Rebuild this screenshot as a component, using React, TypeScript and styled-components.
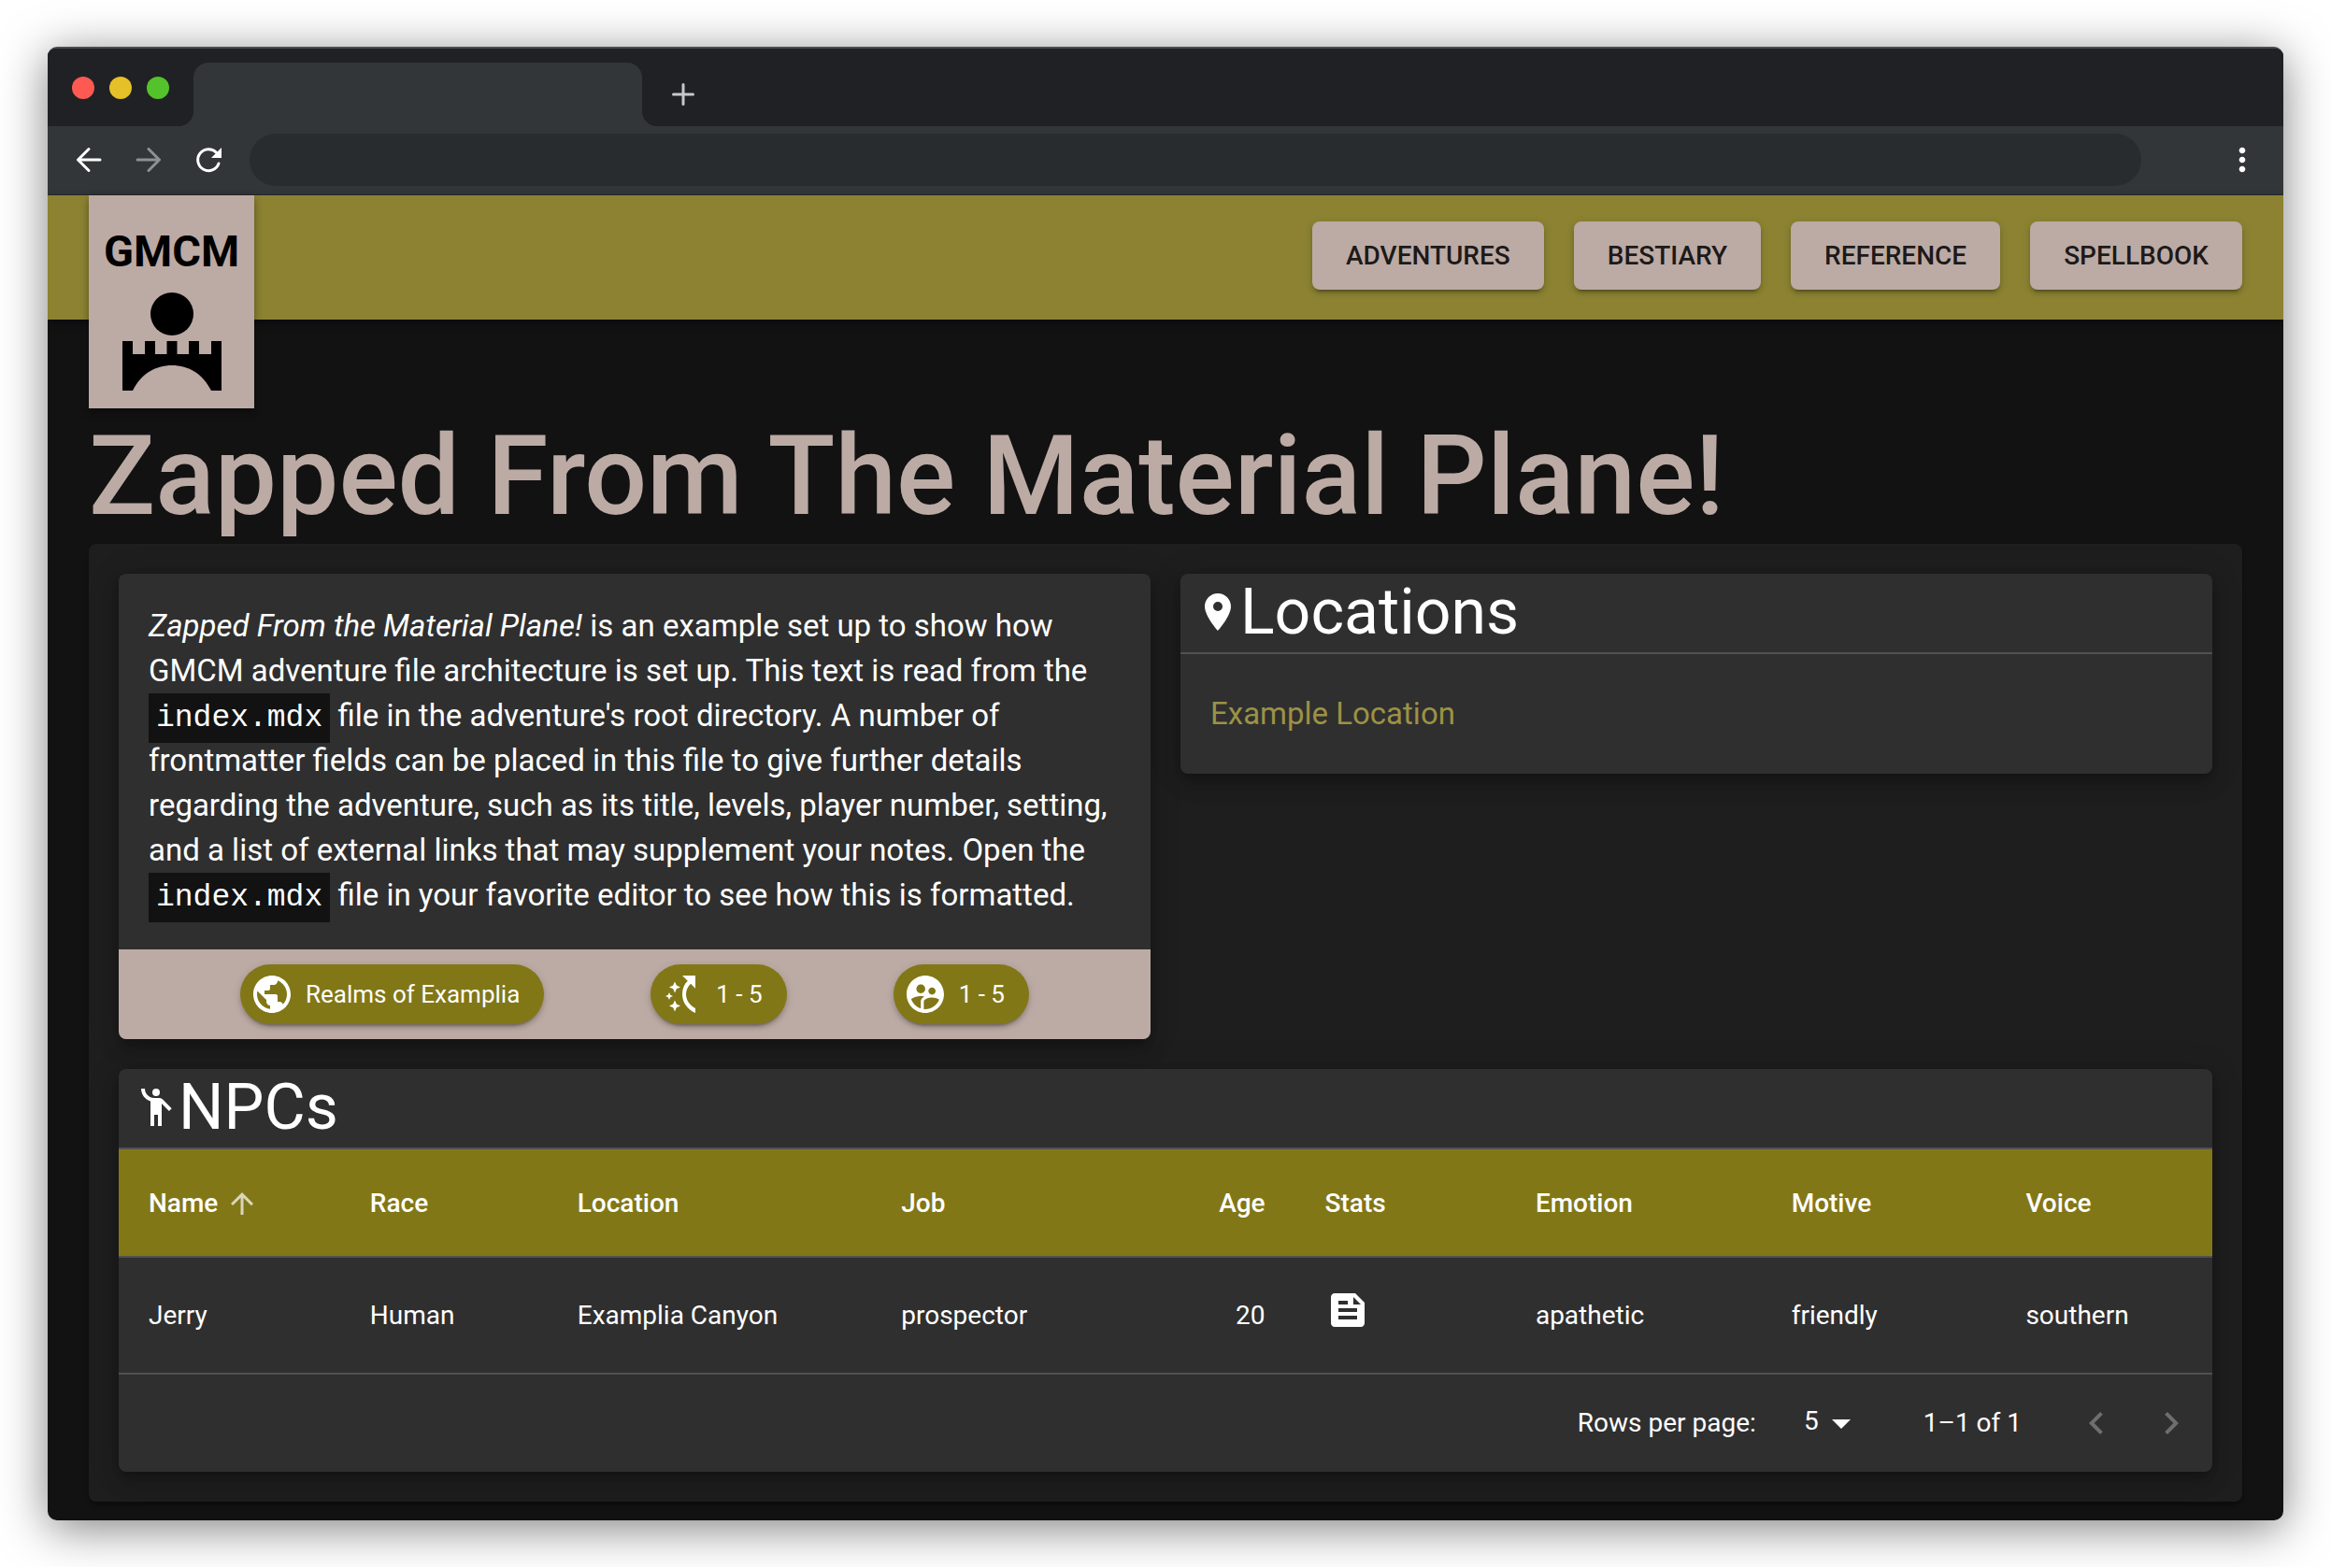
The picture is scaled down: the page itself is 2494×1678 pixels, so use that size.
import React from "react";
import styled, { createGlobalStyle } from "styled-components";
import {
  MdArrowDropDown,
  MdArrowUpward,
  MdChevronLeft,
  MdChevronRight,
  MdEmojiPeople,
  MdFeed,
  MdMoreVert,
  MdPlace,
  MdPublic,
  MdSupervisedUserCircle,
} from "react-icons/md";

const color = {
  olive: "#827717",
  oliveBar: "#8c8232",
  oliveLink: "#9b9245",
  clay: "#bcaaa4",
  page: "#121212",
  panel: "#1e1e1e",
  card: "#2f2f2f",
  rule: "#515151",
};

const GlobalStyle = createGlobalStyle`
  *, *::before, *::after { box-sizing: border-box; }
  body {
    margin: 0;
    background: #fff;
    font-family: Roboto, "Liberation Sans", sans-serif;
    font-size: 28px;
    line-height: 40px;
    color: #fff;
  }
  button, select, input { font: inherit; color: inherit; border: 0; background: none; padding: 0; margin: 0; }
  h1, h2, p { margin: 0; font-weight: 400; }
  svg { display: inline-block; flex: none; }
`;

const Desktop = styled.div`
  padding: 50px 51px;
`;

const BrowserWindow = styled.div`
  overflow: hidden;
  border-radius: 10px;
  border-top: 2px solid #4a4b4d;
  background: ${color.page};
  box-shadow: 0 8px 50px rgba(0, 0, 0, 0.5);
`;

const TabStrip = styled.div`
  display: flex;
  align-items: flex-end;
  height: 83px;
  padding-left: 26px;
  background: #202124;
`;

const Lights = styled.div`
  display: flex;
  gap: 16px;
  width: 130px;
  padding-bottom: 29px;
`;

const Light = styled.span<{ $fill: string }>`
  width: 24px;
  height: 24px;
  border-radius: 50%;
  background: ${(p) => p.$fill};
`;

const Tab = styled.div`
  position: relative;
  width: 480px;
  height: 68px;
  border-radius: 16px 16px 0 0;
  background: #323639;

  &::before,
  &::after {
    content: "";
    position: absolute;
    bottom: 0;
    width: 16px;
    height: 16px;
  }
  &::before {
    right: 100%;
    background: radial-gradient(circle at 0 0, transparent 16px, #323639 16px);
  }
  &::after {
    left: 100%;
    background: radial-gradient(circle at 100% 0, transparent 16px, #323639 16px);
  }
`;

const IconButton = styled.button<{ $fade?: number; $size?: number }>`
  display: grid;
  place-items: center;
  flex: none;
  width: ${(p) => p.$size ?? 64}px;
  height: ${(p) => p.$size ?? 64}px;
  opacity: ${(p) => p.$fade ?? 1};
`;

const NewTab = styled(IconButton)`
  height: 68px;
  margin-left: 12px;
  color: #c6c8ca;
`;

const Toolbar = styled.div`
  display: flex;
  align-items: center;
  height: 74px;
  padding: 0 12px 2px;
  background: #323639;
  border-bottom: 1px solid #26292b;
`;

const Address = styled.input`
  flex: 1;
  min-width: 0;
  height: 56px;
  margin: 0 76px 0 12px;
  padding: 0 28px;
  border-radius: 28px;
  background: #282c2f;
`;

const Header = styled.header`
  display: flex;
  justify-content: space-between;
  align-items: flex-start;
  height: 133px;
  padding: 0 44px;
  background: ${color.oliveBar};
  box-shadow: 0 4px 8px rgba(0, 0, 0, 0.4);
`;

const Brand = styled.a`
  display: flex;
  flex-direction: column;
  align-items: center;
  gap: 16px;
  width: 177px;
  height: 228px;
  padding-top: 32px;
  background: ${color.clay};
  color: #000;
  font-size: 47px;
  line-height: 56px;
  font-weight: 700;
  text-decoration: none;
  box-shadow: 0 4px 8px rgba(0, 0, 0, 0.4);
`;

const Nav = styled.nav`
  display: flex;
  gap: 32px;
  padding-top: 28px;
`;

const NavButton = styled.button`
  padding: 12px 36px;
  border-radius: 8px;
  background: ${color.clay};
  color: rgba(0, 0, 0, 0.87);
  font-weight: 500;
  line-height: 49px;
  text-transform: uppercase;
  box-shadow: 0 6px 2px -4px rgba(0, 0, 0, 0.2), 0 4px 4px rgba(0, 0, 0, 0.14), 0 2px 10px rgba(0, 0, 0, 0.12);
`;

const Main = styled.main`
  padding: 100px 44px 20px;
`;

const Title = styled.h1`
  padding-bottom: 4px;
  color: ${color.clay};
  font-size: 118px;
  line-height: 136px;
  font-weight: 500;
`;

const Panel = styled.div`
  display: grid;
  grid-template-columns: 1fr 1fr;
  align-items: start;
  gap: 32px;
  padding: 32px;
  border-radius: 8px;
  background: ${color.panel};
  box-shadow: 0 4px 4px rgba(0, 0, 0, 0.3);
`;

const Card = styled.section<{ $wide?: boolean }>`
  grid-column: ${(p) => (p.$wide ? "1 / -1" : "auto")};
  overflow: hidden;
  border-radius: 8px;
  background: ${color.card};
  box-shadow: 0 6px 10px -2px rgba(0, 0, 0, 0.2), 0 12px 20px rgba(0, 0, 0, 0.14), 0 2px 36px rgba(0, 0, 0, 0.12);
`;

const CardTitle = styled.h2`
  display: flex;
  align-items: center;
  padding: 0 16px 2px;
  border-bottom: 2px solid ${color.rule};
  font-size: 68px;
  line-height: 82px;
`;

const Prose = styled.p`
  padding: 32px 32px 34px;
  font-size: 33px;
  line-height: 48px;
`;

const Code = styled.code`
  padding: 8px;
  background: ${color.page};
  font-family: "Liberation Mono", monospace;
  line-height: 40px;
`;

const ChipRow = styled.div`
  display: flex;
  justify-content: space-evenly;
  padding: 16px;
  background: ${color.clay};
`;

const Chip = styled.span`
  display: flex;
  align-items: center;
  gap: 12px;
  height: 64px;
  padding: 0 26px 0 10px;
  border-radius: 32px;
  background: ${color.olive};
  font-size: 26px;
  box-shadow: 0 6px 2px -4px rgba(0, 0, 0, 0.2), 0 4px 4px rgba(0, 0, 0, 0.14), 0 2px 10px rgba(0, 0, 0, 0.12);
`;

const LinkList = styled.div`
  padding: 40px 32px;
  font-size: 33px;
  line-height: 48px;
`;

const TextLink = styled.a`
  color: ${color.oliveLink};
  text-decoration: none;
`;

const Table = styled.table`
  width: 100%;
  border-collapse: separate;
  border-spacing: 0;
`;

const HeadCell = styled.th<{ $end?: boolean }>`
  height: 116px;
  padding: 0 32px;
  background: ${color.olive};
  border-bottom: 2px solid ${color.rule};
  font-weight: 500;
  text-align: ${(p) => (p.$end ? "right" : "left")};
`;

const SortButton = styled.button<{ $active?: boolean; $end?: boolean }>`
  display: inline-flex;
  flex-direction: ${(p) => (p.$end ? "row-reverse" : "row")};
  align-items: center;
  vertical-align: middle;

  svg {
    margin: 0 8px;
    opacity: ${(p) => (p.$active ? 0.7 : 0)};
  }
`;

const Cell = styled.td<{ $end?: boolean }>`
  padding: 32px;
  border-bottom: 2px solid ${color.rule};
  text-align: ${(p) => (p.$end ? "right" : "left")};
`;

const StatsLink = styled.a`
  color: inherit;
`;

const Pagination = styled.div`
  display: flex;
  justify-content: flex-end;
  align-items: center;
  height: 104px;
  padding-right: 4px;
`;

const SelectBox = styled.span`
  display: grid;
  align-items: center;
  margin: 0 64px 0 16px;

  > * { grid-area: 1 / 1; }
  > svg { justify-self: end; pointer-events: none; }
`;

const RowsSelect = styled.select`
  appearance: none;
  width: 99px;
  padding: 0 48px 4px 16px;
  text-align-last: right;
  line-height: 40px;
`;

const Range = styled.span`
  margin-right: 40px;
`;

const BridgeMark = () => (
  <svg width="106" height="105" viewBox="0 0 106 105" aria-hidden="true">
    <circle cx="53" cy="23" r="23" />
    <path d="M0 52h11v14h13V52h11v14h12.500V52h11v14H71V52h11v14h13V52h11v53H95C86 87 71 78 53 78S20 87 11 105H0z" />
  </svg>
);

const LevelsIcon = () => (
  <svg width="48" height="48" viewBox="0 0 24 24" fill="currentColor" aria-hidden="true">
    <path d="M12 2h7v6.900l-2.500-2.500C14.900 8 14 10 14 12c0 3.100 2 6 5 7.500V22c-4.300-1.800-7-5.700-7-10 0-2.800 1-5.400 2.900-7.100z" />
    <path d="M8 5.200l.9 2.100 2.100.9-2.100.9L8 11.200l-.9-2.100L5 8.200l2.100-.9zM8 15.200l.9 2.100 2.100.9-2.100.9-.9 2.100-.9-2.100-2.100-.9 2.100-.9zM5 11l.6 1.400L7 13l-1.400.6L5 15l-.6-1.400L3 13l1.400-.6z" />
  </svg>
);

const LineIcon = styled.svg.attrs({ width: 40, height: 40, viewBox: "0 0 40 40", "aria-hidden": true })`
  fill: none;
  stroke: currentColor;
  stroke-width: 3;
  stroke-linecap: round;
  stroke-linejoin: round;
`;

const columns = [
  { label: "Name", value: "Jerry", active: true },
  { label: "Race", value: "Human" },
  { label: "Location", value: "Examplia Canyon" },
  { label: "Job", value: "prospector" },
  { label: "Age", value: "20", end: true },
  {
    label: "Stats",
    value: (
      <StatsLink href="#stats" aria-label="Open stats">
        <MdFeed size={48} />
      </StatsLink>
    ),
  },
  { label: "Emotion", value: "apathetic" },
  { label: "Motive", value: "friendly" },
  { label: "Voice", value: "southern" },
];

export default function App() {
  return (
    <Desktop>
      <GlobalStyle />
      <BrowserWindow>
        <TabStrip>
          <Lights>
            <Light $fill="#ff5a52" />
            <Light $fill="#e6c029" />
            <Light $fill="#54c22b" />
          </Lights>
          <Tab />
          <NewTab aria-label="New tab">
            <LineIcon strokeWidth={4}><path d="M20 9.500v21M9.500 20h21" /></LineIcon>
          </NewTab>
        </TabStrip>
        <Toolbar>
          <IconButton aria-label="Back">
            <LineIcon><path d="M32 20H8.500M20 8.500L8.500 20 20 31.500" /></LineIcon>
          </IconButton>
          <IconButton aria-label="Forward" $fade={0.45}>
            <LineIcon><path d="M8 20h23.500M20 8.500L31.500 20 20 31.500" /></LineIcon>
          </IconButton>
          <IconButton aria-label="Reload">
            <LineIcon>
              <path d="M28.500 12.200A11.500 11.500 0 1 0 31 24" />
              <path d="M34 7v11H23z" fill="currentColor" stroke="none" />
            </LineIcon>
          </IconButton>
          <Address aria-label="Address" />
          <IconButton aria-label="Menu"><MdMoreVert size={40} /></IconButton>
        </Toolbar>

        <Header>
          <Brand href="#home">
            GMCM
            <BridgeMark />
          </Brand>
          <Nav>
            <NavButton>Adventures</NavButton>
            <NavButton>Bestiary</NavButton>
            <NavButton>Reference</NavButton>
            <NavButton>Spellbook</NavButton>
          </Nav>
        </Header>

        <Main>
          <Title>Zapped From The Material Plane!</Title>
          <Panel>
            <Card>
              <Prose>
                <em>Zapped From the Material Plane!</em> is an example set up to show how GMCM adventure file
                architecture is set up. This text is read from the <Code>index.mdx</Code> file in the adventure's root
                directory. A number of frontmatter fields can be placed in this file to give further details regarding
                the adventure, such as its title, levels, player number, setting, and a list of external links that may
                supplement your notes. Open the <Code>index.mdx</Code> file in your favorite editor to see how this is
                formatted.
              </Prose>
              <ChipRow>
                <Chip><MdPublic size={48} />Realms of Examplia</Chip>
                <Chip><LevelsIcon />1 - 5</Chip>
                <Chip><MdSupervisedUserCircle size={48} />1 - 5</Chip>
              </ChipRow>
            </Card>

            <Card>
              <CardTitle><MdPlace size={48} />Locations</CardTitle>
              <LinkList>
                <TextLink href="#example-location">Example Location</TextLink>
              </LinkList>
            </Card>

            <Card $wide>
              <CardTitle><MdEmojiPeople size={48} />NPCs</CardTitle>
              <Table>
                <thead>
                  <tr>
                    {columns.map((c) => (
                      <HeadCell key={c.label} $end={c.end} scope="col">
                        <SortButton $active={c.active} $end={c.end}>
                          {c.label}
                          <MdArrowUpward size={36} />
                        </SortButton>
                      </HeadCell>
                    ))}
                  </tr>
                </thead>
                <tbody>
                  <tr>
                    {columns.map((c) => (
                      <Cell key={c.label} $end={c.end}>{c.value}</Cell>
                    ))}
                  </tr>
                </tbody>
              </Table>
              <Pagination>
                <label htmlFor="rows-per-page">Rows per page:</label>
                <SelectBox>
                  <RowsSelect id="rows-per-page" defaultValue="5">
                    <option>5</option>
                    <option>10</option>
                    <option>25</option>
                  </RowsSelect>
                  <MdArrowDropDown size={48} />
                </SelectBox>
                <Range>1–1 of 1</Range>
                <IconButton $fade={0.3} $size={80} disabled aria-label="Previous page"><MdChevronLeft size={48} /></IconButton>
                <IconButton $fade={0.3} $size={80} disabled aria-label="Next page"><MdChevronRight size={48} /></IconButton>
              </Pagination>
            </Card>
          </Panel>
        </Main>
      </BrowserWindow>
    </Desktop>
  );
}
